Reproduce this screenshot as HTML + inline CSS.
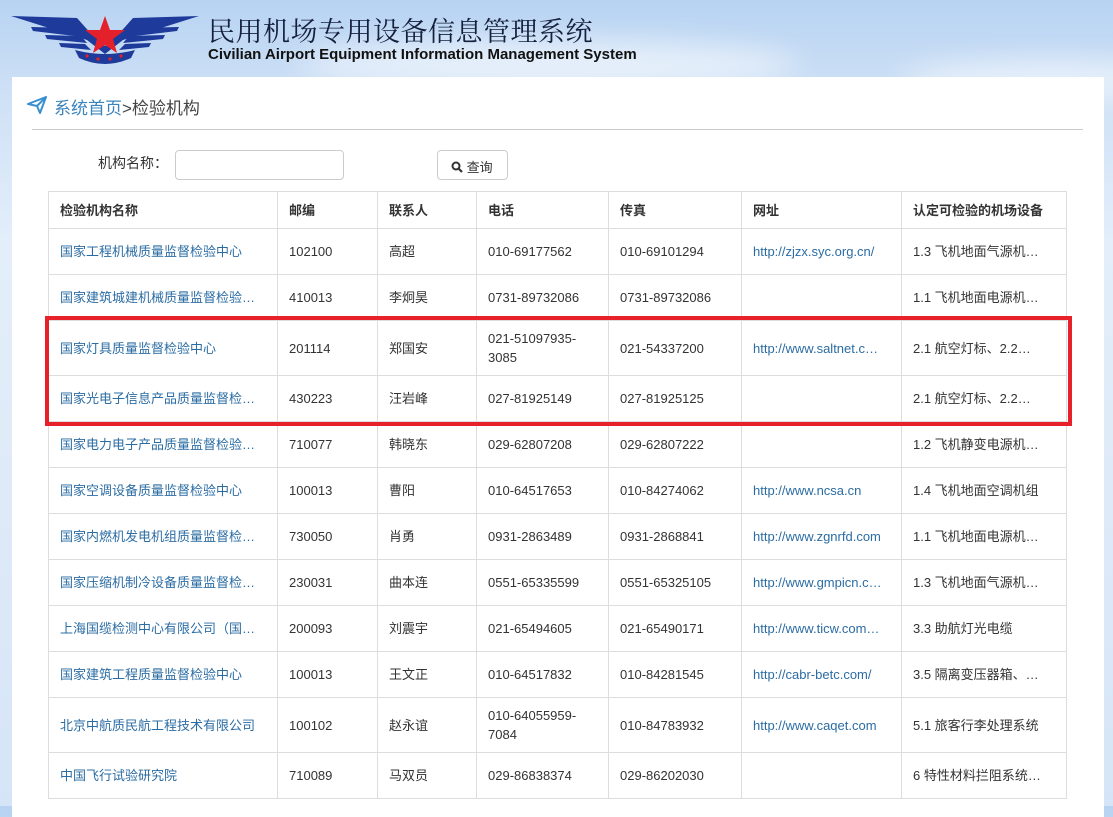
<!DOCTYPE html>
<html><head><meta charset="utf-8"><style>
*{margin:0;padding:0;box-sizing:border-box}
body{width:1113px;height:806px;overflow:hidden;position:relative;font-family:"Liberation Sans","Noto Sans CJK SC",sans-serif;color:#333;
background:linear-gradient(180deg,#b7d3f2 0%,#cfe1f6 12%,#e3eefa 30%,#dfeaf8 60%,#d5e5f7 100%);}
.cloud{position:absolute;border-radius:50%;background:rgba(255,255,255,.55);filter:blur(14px)}
.panel{position:absolute;left:12px;top:77px;width:1092px;height:740px;background:#fff}
.t1{position:absolute;left:208px;top:10px;font-size:27px;color:#14203e;font-family:"Liberation Serif","Noto Serif CJK SC",serif;letter-spacing:0.5px}
.t2{position:absolute;left:208px;top:46px;font-size:15px;font-weight:bold;color:#111}
.bc{position:absolute;left:54px;top:94px;font-size:17px;color:#444}
.bc span{color:#3a84bd}
.hr{position:absolute;left:32px;top:129px;width:1051px;height:1px;background:#ccc}
.lbl{position:absolute;left:98px;top:153px;font-size:14px;color:#333}
.inp{position:absolute;left:175px;top:150px;width:169px;height:30px;border:1px solid #ccc;border-radius:4px}
.btn{position:absolute;left:437px;top:150px;width:71px;height:30px;border:1px solid #ccc;border-radius:4px;font-size:13px;padding:6px 0 0 13px}
table{position:absolute;left:48px;top:191px;border-collapse:collapse;table-layout:fixed;font-size:13px}
td,th{border:1px solid #ddd;padding:0 11px;text-align:left;white-space:nowrap;overflow:hidden;line-height:19px;color:#333}
th{font-weight:bold;height:37px}
td{height:46px}
td.tall{height:55px;white-space:normal}
a{color:#2b6ca3;text-decoration:none}
.red{position:absolute;left:45px;top:316px;width:1027px;height:110px;border:4px solid #e8202a}
</style></head><body>
<div class="cloud" style="left:300px;top:40px;width:500px;height:50px"></div>
<div class="cloud" style="left:900px;top:60px;width:300px;height:40px"></div>
<svg style="position:absolute;left:11px;top:14px" width="188" height="52" viewBox="0 0 188 52">
<g fill="#1e3a9a">
<path d="M0 2 L66 4 L82 22 L76 26 Z"/>
<path d="M188 2 L122 4 L106 22 L112 26 Z"/>
<path d="M20 13 L64 14 L72 23 L22 17 Z"/>
<path d="M168 13 L124 14 L116 23 L166 17 Z"/>
<path d="M34 21 L70 22 L76 29 L36 25 Z"/>
<path d="M154 21 L118 22 L112 29 L152 25 Z"/>
<path d="M48 29 L74 30 L80 36 L50 33 Z"/>
<path d="M140 29 L114 30 L108 36 L138 33 Z"/>
<path d="M66 6 L94 32 L122 6 L112 26 L94 40 L76 26 Z"/>
<path d="M64 36 Q94 44 124 36 L120 44 Q94 56 68 44 Z"/>
</g>
<polygon fill="#e4202a" points="94,2 99,16 114,16 102,25 106,39 94,31 82,39 86,25 74,16 89,16"/>
<g fill="#e4202a"><circle cx="76" cy="42" r="1.6"/><circle cx="87" cy="45" r="1.6"/><circle cx="99" cy="45" r="1.6"/><circle cx="110" cy="42" r="1.6"/></g>
</svg>
<div class="t1">民用机场专用设备信息管理系统</div>
<div class="t2">Civilian Airport Equipment Information Management System</div>
<div class="panel"></div>
<svg style="position:absolute;left:27px;top:96px" width="20" height="18" viewBox="0 0 20 18"><path d="M1 8 L19 1 L13 17 L10 10 Z M10 10 L19 1" fill="none" stroke="#3a8fd0" stroke-width="2" stroke-linejoin="round"/></svg>
<div class="bc"><span>系统首页</span>&gt;检验机构</div>
<div class="hr"></div>
<div class="lbl">机构名称：</div>
<div class="inp"></div>
<div class="btn"><svg width="12" height="12" viewBox="0 0 12 12" style="vertical-align:-1px"><circle cx="5" cy="5" r="3.5" fill="none" stroke="#333" stroke-width="2"/><path d="M7.5 7.5 L11 11" stroke="#333" stroke-width="2.2"/></svg> 查询</div>
<table>
<colgroup><col style="width:229px"><col style="width:100px"><col style="width:99px"><col style="width:132px"><col style="width:133px"><col style="width:160px"><col style="width:165px"></colgroup>
<tr><th>检验机构名称</th><th>邮编</th><th>联系人</th><th>电话</th><th>传真</th><th>网址</th><th>认定可检验的机场设备</th></tr>
<tr><td><a>国家工程机械质量监督检验中心</a></td><td>102100</td><td>高超</td><td>010-69177562</td><td>010-69101294</td><td><a>http://zjzx.syc.org.cn/</a></td><td>1.3 飞机地面气源机…</td></tr>
<tr><td><a>国家建筑城建机械质量监督检验…</a></td><td>410013</td><td>李炯昊</td><td>0731-89732086</td><td>0731-89732086</td><td></td><td>1.1 飞机地面电源机…</td></tr>
<tr><td class="tall"><a>国家灯具质量监督检验中心</a></td><td>201114</td><td>郑国安</td><td class="tall">021-51097935-<br>3085</td><td>021-54337200</td><td><a>http://www.saltnet.c…</a></td><td>2.1 航空灯标、2.2…</td></tr>
<tr><td><a>国家光电子信息产品质量监督检…</a></td><td>430223</td><td>汪岩峰</td><td>027-81925149</td><td>027-81925125</td><td></td><td>2.1 航空灯标、2.2…</td></tr>
<tr><td><a>国家电力电子产品质量监督检验…</a></td><td>710077</td><td>韩晓东</td><td>029-62807208</td><td>029-62807222</td><td></td><td>1.2 飞机静变电源机…</td></tr>
<tr><td><a>国家空调设备质量监督检验中心</a></td><td>100013</td><td>曹阳</td><td>010-64517653</td><td>010-84274062</td><td><a>http://www.ncsa.cn</a></td><td>1.4 飞机地面空调机组</td></tr>
<tr><td><a>国家内燃机发电机组质量监督检…</a></td><td>730050</td><td>肖勇</td><td>0931-2863489</td><td>0931-2868841</td><td><a>http://www.zgnrfd.com</a></td><td>1.1 飞机地面电源机…</td></tr>
<tr><td><a>国家压缩机制冷设备质量监督检…</a></td><td>230031</td><td>曲本连</td><td>0551-65335599</td><td>0551-65325105</td><td><a>http://www.gmpicn.c…</a></td><td>1.3 飞机地面气源机…</td></tr>
<tr><td><a>上海国缆检测中心有限公司（国…</a></td><td>200093</td><td>刘震宇</td><td>021-65494605</td><td>021-65490171</td><td><a>http://www.ticw.com…</a></td><td>3.3 助航灯光电缆</td></tr>
<tr><td><a>国家建筑工程质量监督检验中心</a></td><td>100013</td><td>王文正</td><td>010-64517832</td><td>010-84281545</td><td><a>http://cabr-betc.com/</a></td><td>3.5 隔离变压器箱、…</td></tr>
<tr><td class="tall"><a>北京中航质民航工程技术有限公司</a></td><td>100102</td><td>赵永谊</td><td class="tall">010-64055959-<br>7084</td><td>010-84783932</td><td><a>http://www.caqet.com</a></td><td>5.1 旅客行李处理系统</td></tr>
<tr><td><a>中国飞行试验研究院</a></td><td>710089</td><td>马双员</td><td>029-86838374</td><td>029-86202030</td><td></td><td>6 特性材料拦阻系统…</td></tr>
</table>
<div class="red"></div>
</body></html>
